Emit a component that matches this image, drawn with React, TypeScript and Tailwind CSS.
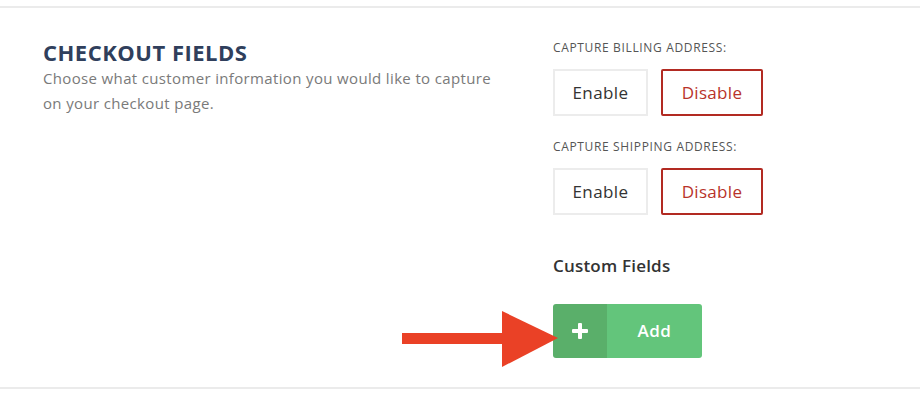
import React from "react";

function ToggleRow() {
  return (
    <div className="flex gap-[13px]">
      <button className="w-[95px] h-[47px] border-2 border-[#ececec] bg-white text-[17px] tracking-[0.4px] text-[#333]">
        Enable
      </button>
      <button className="w-[102px] h-[47px] border-2 border-[#b22a22] rounded-[2px] bg-white text-[17px] tracking-[0.3px] text-[#b8332a]">
        Disable
      </button>
    </div>
  );
}

export default function App() {
  return (
    <div
      className="relative w-[920px] h-[399px] bg-white overflow-hidden"
      style={{ fontFamily: "'Open Sans', Lato, sans-serif" }}
    >
      <div className="mt-[6px] border-t-2 border-[#ebebeb]" />
      <div className="flex pl-[43px]">
        <div className="w-[510px] pt-[31px]">
          <h1 className="text-[22px] leading-[26px] font-bold text-[#303f5c] tracking-[0.5px]">
            CHECKOUT FIELDS
          </h1>
          <p className="mt-[1px] text-[15px] leading-[25px] text-[#7a7a7a] tracking-[0.35px] whitespace-nowrap">
            Choose what customer information you would like to capture
            <br />
            on your checkout page.
          </p>
        </div>
        <div className="flex flex-col pt-[32px]">
          <div className="text-[12px] leading-[16px] text-[#555] tracking-[0.65px]">
            CAPTURE BILLING ADDRESS:
          </div>
          <div className="mt-[13px]">
            <ToggleRow />
          </div>
          <div className="mt-[23px] text-[12px] leading-[16px] text-[#555] tracking-[0.65px]">
            CAPTURE SHIPPING ADDRESS:
          </div>
          <div className="mt-[13px]">
            <ToggleRow />
          </div>
          <div className="mt-[40px] text-[17px] leading-[22px] font-semibold text-[#333] tracking-[0.2px]">
            Custom Fields
          </div>
          <div className="mt-[27px] flex w-[149px] h-[54px] rounded-[3px] overflow-hidden">
            <div className="w-[54px] bg-[#5aaf6a] flex items-center justify-center">
              <svg width="16" height="16" viewBox="0 0 16 16">
                <rect x="6" y="0" width="4" height="16" rx="1" fill="#fff" />
                <rect x="0" y="6" width="16" height="4" rx="1" fill="#fff" />
              </svg>
            </div>
            <div className="flex-1 bg-[#63c57b] flex items-center justify-center text-white text-[17px] font-semibold tracking-[0.5px]">
              Add
            </div>
          </div>
        </div>
      </div>
      <div className="absolute left-0 right-0 top-[387px] border-t-2 border-[#ebebeb]" />
      <svg className="absolute left-[402px] top-[311px]" width="158" height="57" viewBox="0 0 158 57">
        <rect x="0" y="22" width="102" height="11" fill="#ea4126" />
        <polygon points="100,0 156,27 100,56" fill="#ea4126" />
      </svg>
    </div>
  );
}
